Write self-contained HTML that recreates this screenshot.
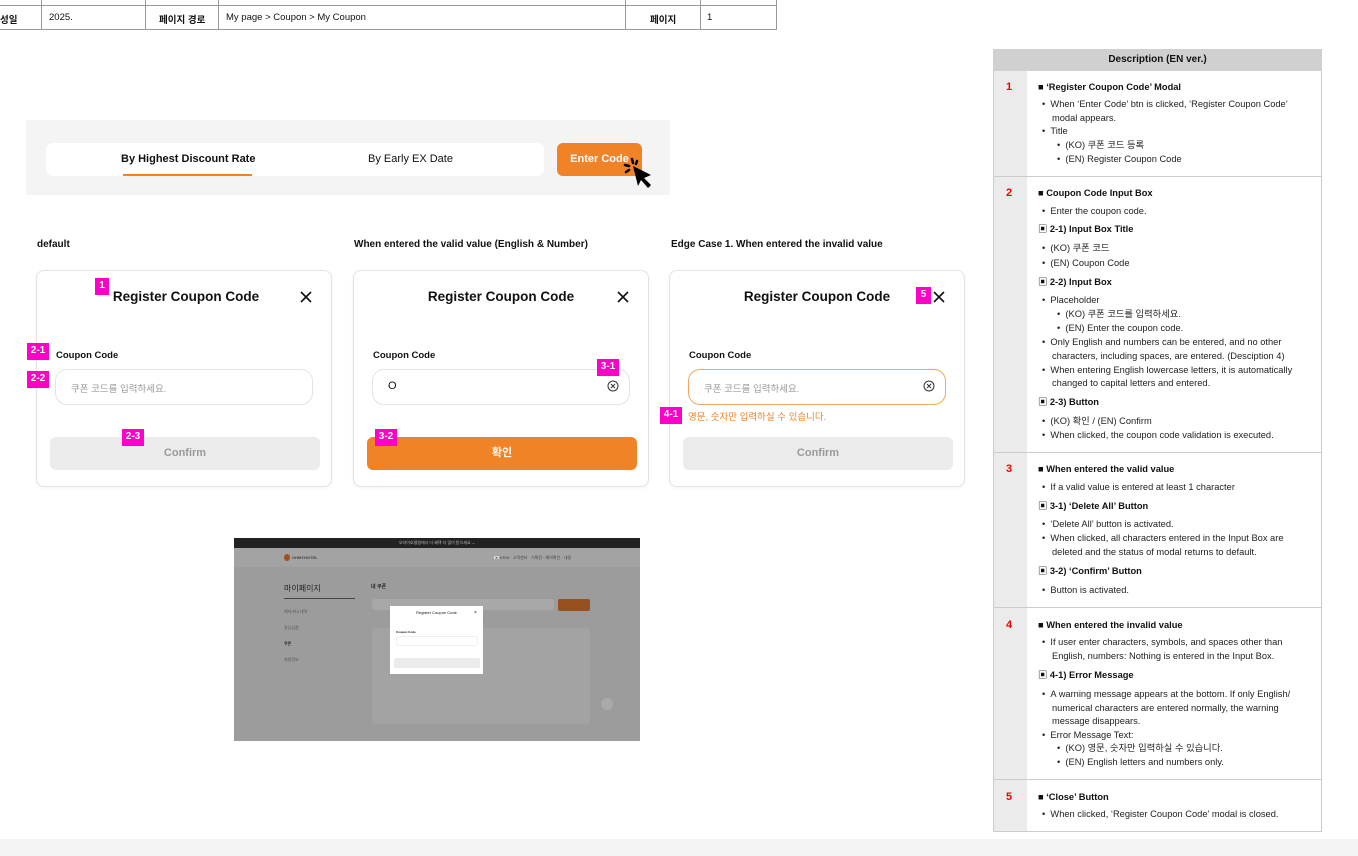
<!DOCTYPE html>
<html><head><meta charset="utf-8"><style>
*{margin:0;padding:0;box-sizing:border-box}
body{width:1358px;height:856px;position:relative;background:#fff;font-family:"Liberation Sans","Noto Sans CJK KR",sans-serif;color:#111;overflow:hidden}
.a{position:absolute}
.tag{position:absolute;background:#ff00c8;color:#fff;font-size:10px;font-weight:bold;text-align:center;line-height:16px;height:17px}
.modal{position:absolute;top:270px;width:296px;height:217px;border:1px solid #e3e3e3;border-radius:8px;background:#fff;box-shadow:0 1px 3px rgba(0,0,0,.05)}
.mt{position:absolute;top:18px;left:0;width:100%;text-align:center;font-size:13.5px;font-weight:bold}
.x{position:absolute;top:19px;right:18px;width:14px;height:14px}
.lbl{position:absolute;top:79px;left:19px;font-size:9.5px;font-weight:bold}
.inp{position:absolute;top:98px;left:18px;width:258px;height:36px;border:1px solid #e3e3e3;border-radius:12px;font-size:9.5px;color:#999;padding:11px 0 0 15px}
.btn{position:absolute;top:166px;left:13px;width:270px;height:33px;border-radius:6px;background:#ebebeb;color:#9a9a9a;font-size:11px;font-weight:bold;text-align:center;line-height:33px}
.d{position:absolute;font-size:9.3px;line-height:14px;white-space:nowrap;color:#222}
.h{font-weight:bold;color:#111}
.num{position:absolute;left:1006px;color:#e00;font-weight:bold;font-size:11px}
</style></head><body>

<!-- top table -->
<div class="a" style="left:0;top:0;width:777px;height:30px;border-bottom:1px solid #999"></div>
<div class="a" style="left:0;top:5px;width:777px;height:1px;background:#999"></div>
<div class="a" style="left:41px;top:0;width:1px;height:30px;background:#999"></div>
<div class="a" style="left:145px;top:0;width:1px;height:30px;background:#999"></div>
<div class="a" style="left:218px;top:0;width:1px;height:30px;background:#999"></div>
<div class="a" style="left:625px;top:0;width:1px;height:30px;background:#999"></div>
<div class="a" style="left:700px;top:0;width:1px;height:30px;background:#999"></div>
<div class="a" style="left:776px;top:0;width:1px;height:30px;background:#999"></div>
<div class="a" style="left:0;top:12px;font-size:9.5px;font-weight:bold">성일</div>
<div class="a" style="left:49px;top:12px;font-size:9.5px">2025.</div>
<div class="a" style="left:159px;top:12px;font-size:9.5px;font-weight:bold">페이지 경로</div>
<div class="a" style="left:226px;top:12px;font-size:9.5px">My page &gt; Coupon &gt; My Coupon</div>
<div class="a" style="left:650px;top:12px;font-size:9.5px;font-weight:bold">페이지</div>
<div class="a" style="left:707px;top:12px;font-size:9.5px">1</div>

<!-- tabs panel -->
<div class="a" style="left:26px;top:120px;width:644px;height:75px;background:#f4f4f4"></div>
<div class="a" style="left:46px;top:143px;width:498px;height:33px;background:#fff;border-radius:7px"></div>
<div class="a" style="left:121px;top:153px;font-size:11px;font-weight:bold">By Highest Discount Rate</div>
<div class="a" style="left:123px;top:174px;width:129px;height:2px;background:#f08228"></div>
<div class="a" style="left:368px;top:153px;font-size:11px">By Early EX Date</div>
<div class="a" style="left:557px;top:143px;width:85px;height:33px;background:#f08228;border-radius:6px;color:#fff;font-size:11px;font-weight:bold;text-align:center;line-height:33px">Enter Code</div>
<svg class="a" style="left:622px;top:157px" width="36" height="34" viewBox="0 0 36 34"><g stroke="#000" stroke-width="2.5" stroke-linecap="round"><line x1="10" y1="2" x2="11" y2="6"/><line x1="3" y1="8" x2="7" y2="9"/><line x1="4" y1="15" x2="7" y2="13"/><line x1="15" y1="4" x2="14" y2="7"/></g><path d="M11 9 L16 29 L19 23 L26 31 L29 28 L22 21 L29 18 Z" fill="#000"/></svg>

<!-- section titles -->
<div class="a" style="left:37px;top:239px;font-size:10px;font-weight:bold">default</div>
<div class="a" style="left:354px;top:239px;font-size:10px;font-weight:bold">When entered the valid value (English &amp; Number)</div>
<div class="a" style="left:671px;top:239px;font-size:10px;font-weight:bold">Edge Case 1. When entered the invalid value</div>

<!-- modal 1 -->
<div class="modal" style="left:36px">
<div class="mt" style="padding-left:4px">Register Coupon Code</div>
<svg class="x" viewBox="0 0 14 14"><path d="M2 2L12 12M12 2L2 12" stroke="#111" stroke-width="1.6"/></svg>
<div class="lbl">Coupon Code</div>
<div class="inp">쿠폰 코드를 입력하세요.</div>
<div class="btn">Confirm</div>
</div>
<!-- modal 2 -->
<div class="modal" style="left:353px">
<div class="mt">Register Coupon Code</div>
<svg class="x" viewBox="0 0 14 14"><path d="M2 2L12 12M12 2L2 12" stroke="#111" stroke-width="1.6"/></svg>
<div class="lbl">Coupon Code</div>
<div class="inp" style="color:#111;font-size:11px;padding-top:10px">O</div>
<svg class="a" style="left:253px;top:109px" width="12" height="12" viewBox="0 0 12 12"><circle cx="6" cy="6" r="5" fill="none" stroke="#333" stroke-width="1"/><path d="M4 4L8 8M8 4L4 8" stroke="#333" stroke-width="1"/></svg>
<div class="btn" style="background:#f08228;color:#fff">확인</div>
</div>
<!-- modal 3 -->
<div class="modal" style="left:669px">
<div class="mt">Register Coupon Code</div>
<svg class="x" viewBox="0 0 14 14"><path d="M2 2L12 12M12 2L2 12" stroke="#111" stroke-width="1.6"/></svg>
<div class="lbl">Coupon Code</div>
<div class="inp" style="border-color:#f0a860">쿠폰 코드를 입력하세요.</div>
<svg class="a" style="left:253px;top:109px" width="12" height="12" viewBox="0 0 12 12"><circle cx="6" cy="6" r="5" fill="none" stroke="#333" stroke-width="1"/><path d="M4 4L8 8M8 4L4 8" stroke="#333" stroke-width="1"/></svg>
<div class="a" style="left:18px;top:138px;font-size:9.5px;color:#f08228">영문, 숫자만 입력하실 수 있습니다.</div>
<div class="btn">Confirm</div>
</div>

<!-- tags -->
<div class="tag" style="left:95px;top:278px;width:14px">1</div>
<div class="tag" style="left:27px;top:343px;width:22px">2-1</div>
<div class="tag" style="left:27px;top:371px;width:22px">2-2</div>
<div class="tag" style="left:122px;top:429px;width:22px">2-3</div>
<div class="tag" style="left:597px;top:359px;width:22px">3-1</div>
<div class="tag" style="left:375px;top:429px;width:22px">3-2</div>
<div class="tag" style="left:916px;top:287px;width:15px">5</div>
<div class="tag" style="left:660px;top:407px;width:22px">4-1</div>

<!-- screenshot thumbnail -->
<div class="a" style="left:234px;top:538px;width:406px;height:203px;background:#9c9c9c;overflow:hidden">
<div class="a" style="left:0;top:0;width:406px;height:10px;background:#222;color:#bbb;font-size:4px;text-align:center;line-height:10px">오마이호텔앱에서 더 혜택 더 많이 받으세요 ⌄</div>
<div class="a" style="left:0;top:10px;width:406px;height:19px;background:#a3a3a3"></div>
<div class="a" style="left:50px;top:16px;width:6px;height:7px;border-radius:50%;background:#a0521a"></div>
<div class="a" style="left:58px;top:17px;font-size:4px;color:#444;font-weight:bold">OHMYHOTEL</div>
<div class="a" style="left:260px;top:17px;font-size:4px;color:#444">🇰🇷 KRW &nbsp; 고객센터 · 기획전 · 예약확인 · 내정</div>
<div class="a" style="left:50px;top:45px;font-size:8px;color:#222">마이페이지</div>
<div class="a" style="left:50px;top:60px;width:71px;height:1px;background:#444"></div>
<div class="a" style="left:50px;top:66px;font-size:4px;color:#555;line-height:16px">예약/취소내역<br>관심상품<br><b style="color:#222">쿠폰</b><br>회원정보</div>
<div class="a" style="left:137px;top:45px;font-size:5px;color:#222;font-weight:bold">내 쿠폰</div>
<div class="a" style="left:138px;top:61px;width:182px;height:11px;background:#a8a8a8;border-radius:3px"></div>
<div class="a" style="left:324px;top:61px;width:32px;height:12px;background:#98501c;border-radius:2px"></div>
<div class="a" style="left:138px;top:90px;width:218px;height:96px;background:#a3a3a3;border-radius:4px"></div>
<div class="a" style="left:367px;top:160px;width:12px;height:12px;border-radius:50%;background:#aaa"></div>
<div class="a" style="left:156px;top:68px;width:93px;height:68px;background:#fff">
<div class="a" style="left:0;top:4px;width:100%;text-align:center;font-size:4px">Register Coupon Code</div>
<div class="a" style="left:84px;top:4px;font-size:5px">×</div>
<div class="a" style="left:6px;top:24px;font-size:3px;font-weight:bold">Coupon Code</div>
<div class="a" style="left:6px;top:30px;width:82px;height:10px;border:1px solid #eee;border-radius:3px"></div>
<div class="a" style="left:4px;top:52px;width:86px;height:10px;background:#ebebeb;border-radius:2px"></div>
</div>
</div>

<!-- description table -->
<div class="a" style="left:993px;top:49px;width:329px;height:783px;border:1px solid #ccc;background:#fff"></div>
<div class="a" style="left:993px;top:49px;width:329px;height:22px;background:#d0d0d0;text-align:center;font-size:10px;font-weight:bold;line-height:22px">Description (EN ver.)</div>
<div class="a" style="left:994px;top:71px;width:33px;height:760px;background:#ebebeb"></div>
<div class="a" style="left:994px;top:176px;width:327px;height:1px;background:#ccc"></div>
<div class="a" style="left:994px;top:452px;width:327px;height:1px;background:#ccc"></div>
<div class="a" style="left:994px;top:607px;width:327px;height:1px;background:#ccc"></div>
<div class="a" style="left:994px;top:779px;width:327px;height:1px;background:#ccc"></div>
<div class="num" style="top:81px">1</div>
<div class="num" style="top:187px">2</div>
<div class="num" style="top:463px">3</div>
<div class="num" style="top:619px">4</div>
<div class="num" style="top:791px">5</div>

<div class="d h" style="left:1038px;top:80px">■ ‘Register Coupon Code’ Modal</div>
<div class="d" style="left:1042px;top:97px">• &nbsp;When ‘Enter Code’ btn is clicked, ‘Register Coupon Code’</div>
<div class="d" style="left:1052px;top:111px">modal appears.</div>
<div class="d" style="left:1042px;top:124px">• &nbsp;Title</div>
<div class="d" style="left:1057px;top:138px">• &nbsp;(KO) 쿠폰 코드 등록</div>
<div class="d" style="left:1057px;top:152px">• &nbsp;(EN) Register Coupon Code</div>

<div class="d h" style="left:1038px;top:186px">■ Coupon Code Input Box</div>
<div class="d" style="left:1042px;top:204px">• &nbsp;Enter the coupon code.</div>
<div class="d h" style="left:1038px;top:222px">▣ 2-1) Input Box Title</div>
<div class="d" style="left:1042px;top:241px">• &nbsp;(KO) 쿠폰 코드</div>
<div class="d" style="left:1042px;top:256px">• &nbsp;(EN) Coupon Code</div>
<div class="d h" style="left:1038px;top:275px">▣ 2-2) Input Box</div>
<div class="d" style="left:1042px;top:293px">• &nbsp;Placeholder</div>
<div class="d" style="left:1057px;top:307px">• &nbsp;(KO) 쿠폰 코드를 입력하세요.</div>
<div class="d" style="left:1057px;top:321px">• &nbsp;(EN) Enter the coupon code.</div>
<div class="d" style="left:1042px;top:335px">• &nbsp;Only English and numbers can be entered, and no other</div>
<div class="d" style="left:1052px;top:349px">characters, including spaces, are entered. (Desciption 4)</div>
<div class="d" style="left:1042px;top:363px">• &nbsp;When entering English lowercase letters, it is automatically</div>
<div class="d" style="left:1052px;top:376px">changed to capital letters and entered.</div>
<div class="d h" style="left:1038px;top:395px">▣ 2-3) Button</div>
<div class="d" style="left:1042px;top:414px">• &nbsp;(KO) 확인 / (EN) Confirm</div>
<div class="d" style="left:1042px;top:428px">• &nbsp;When clicked, the coupon code validation is executed.</div>

<div class="d h" style="left:1038px;top:462px">■ When entered the valid value</div>
<div class="d" style="left:1042px;top:480px">• &nbsp;If a valid value is entered at least 1 character</div>
<div class="d h" style="left:1038px;top:499px">▣ 3-1) ‘Delete All’ Button</div>
<div class="d" style="left:1042px;top:517px">• &nbsp;‘Delete All’ button is activated.</div>
<div class="d" style="left:1042px;top:531px">• &nbsp;When clicked, all characters entered in the Input Box are</div>
<div class="d" style="left:1052px;top:545px">deleted and the status of modal returns to default.</div>
<div class="d h" style="left:1038px;top:564px">▣ 3-2) ‘Confirm’ Button</div>
<div class="d" style="left:1042px;top:583px">• &nbsp;Button is activated.</div>

<div class="d h" style="left:1038px;top:618px">■ When entered the invalid value</div>
<div class="d" style="left:1042px;top:635px">• &nbsp;If user enter characters, symbols, and spaces other than</div>
<div class="d" style="left:1052px;top:649px">English, numbers: Nothing is entered in the Input Box.</div>
<div class="d h" style="left:1038px;top:668px">▣ 4-1) Error Message</div>
<div class="d" style="left:1042px;top:687px">• &nbsp;A warning message appears at the bottom. If only English/</div>
<div class="d" style="left:1052px;top:701px">numerical characters are entered normally, the warning</div>
<div class="d" style="left:1052px;top:714px">message disappears.</div>
<div class="d" style="left:1042px;top:728px">• &nbsp;Error Message Text:</div>
<div class="d" style="left:1057px;top:741px">• &nbsp;(KO) 영문, 숫자만 입력하실 수 있습니다.</div>
<div class="d" style="left:1057px;top:755px">• &nbsp;(EN) English letters and numbers only.</div>

<div class="d h" style="left:1038px;top:790px">■ ‘Close’ Button</div>
<div class="d" style="left:1042px;top:807px">• &nbsp;When clicked, ‘Register Coupon Code’ modal is closed.</div>

<div class="a" style="left:0;top:839px;width:1358px;height:17px;background:#f4f4f4"></div>
</body></html>
